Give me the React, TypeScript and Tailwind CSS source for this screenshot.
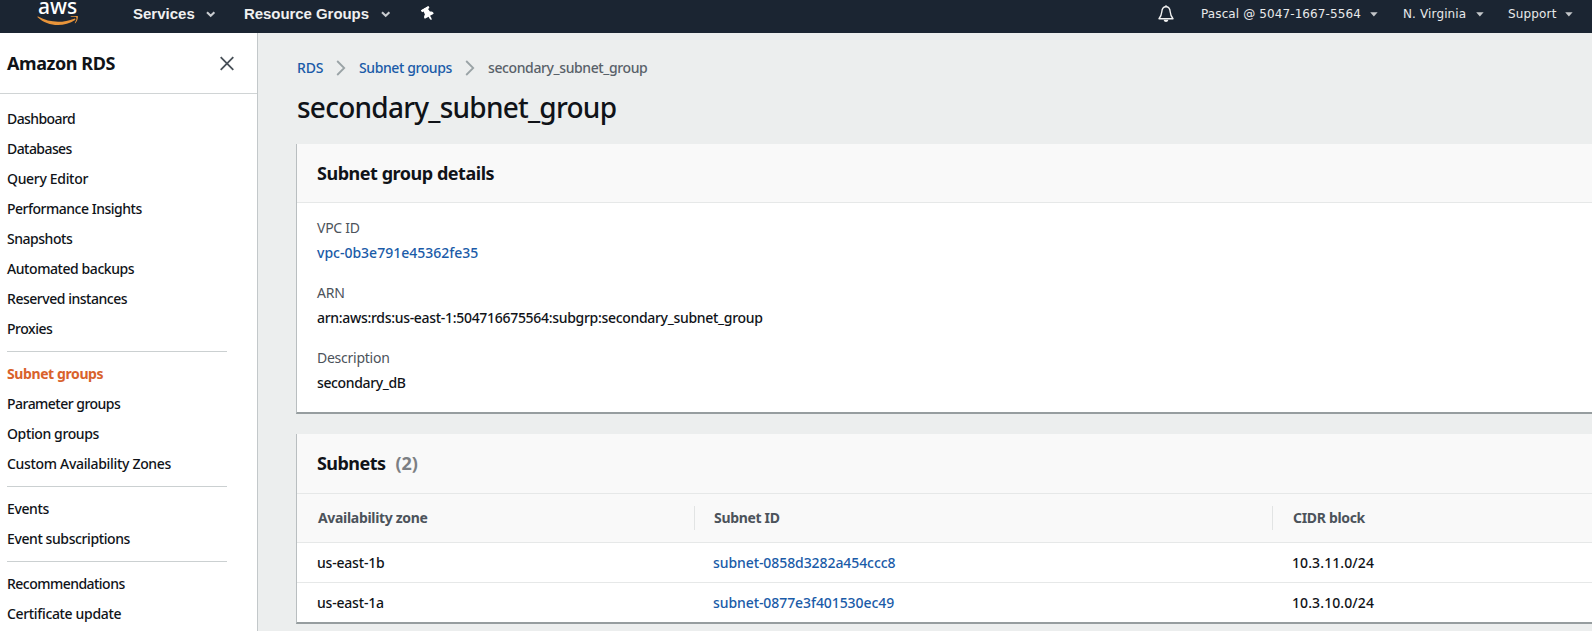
import React from "react";
import { FaThumbtack } from "react-icons/fa";

type Entry = { label: string; tracking: string; active?: boolean };

const sections: Entry[][] = [
  [
    { label: "Dashboard", tracking: "tracking-[-0.58px]" },
    { label: "Databases", tracking: "tracking-[-0.57px]" },
    { label: "Query Editor", tracking: "tracking-[-0.32px]" },
    { label: "Performance Insights", tracking: "tracking-[-0.49px]" },
    { label: "Snapshots", tracking: "tracking-[-0.47px]" },
    { label: "Automated backups", tracking: "tracking-[-0.43px]" },
    { label: "Reserved instances", tracking: "tracking-[-0.47px]" },
    { label: "Proxies", tracking: "tracking-[-0.48px]" },
  ],
  [
    { label: "Subnet groups", tracking: "tracking-[-0.4px]", active: true },
    { label: "Parameter groups", tracking: "tracking-[-0.52px]" },
    { label: "Option groups", tracking: "tracking-[-0.38px]" },
    { label: "Custom Availability Zones", tracking: "tracking-[-0.32px]" },
  ],
  [
    { label: "Events", tracking: "tracking-[-0.38px]" },
    { label: "Event subscriptions", tracking: "tracking-[-0.4px]" },
  ],
  [
    { label: "Recommendations", tracking: "tracking-[-0.53px]" },
    { label: "Certificate update", tracking: "tracking-[-0.34px]" },
  ],
];

const subnets = [
  { zone: "us-east-1b", id: "subnet-0858d3282a454ccc8", cidr: "10.3.11.0/24" },
  { zone: "us-east-1a", id: "subnet-0877e3f401530ec49", cidr: "10.3.10.0/24" },
];

function Chevron() {
  return (
    <svg width="10" height="7" viewBox="0 0 10 7" fill="none" stroke="#c9ccd0" strokeWidth="2.1">
      <path d="M1 1.200 4.700 4.700l3.700-3.500" />
    </svg>
  );
}

function Caret() {
  return (
    <svg width="8" height="5" viewBox="0 0 8 5" fill="#c4c7ca">
      <path d="M0.200 0.200h7.400L3.900 4.400z" />
    </svg>
  );
}

function Separator() {
  return (
    <svg width="10" height="16" viewBox="0 0 10 16" fill="none" stroke="#9aa3a6" strokeWidth="1.800">
      <path d="M1.200 1 8.200 8l-7 7" />
    </svg>
  );
}

function TopBar() {
  return (
    <header className="flex h-[33px] shrink-0 bg-[#1b2532] text-[#f0f0f0]">
      <div className="flex w-[133px] shrink-0 flex-col pl-[37px]">
        <span className="block h-[16px] pl-[1px] font-['Noto_Sans',sans-serif] text-[21px] leading-[12px] font-medium text-white">
          aws
        </span>
        <svg width="42" height="11" viewBox="0 0 42 11" fill="#e8943a">
          <path d="M0.600 1.200C0.200 0.900 0.600 0.300 1.100 0.600 12.500 7 25.500 7.200 37.300 2.700c0.900-0.400 1.600 0.600 0.800 1.200C26.800 11.400 10.600 10.700 0.600 1.200z" />
          <path d="M39.300 1.500c-0.900-1-4-0.600-5.400-0.400-0.500 0-0.500-0.400-0.100-0.600 2.200-1.300 6.400-1 6.900-0.400 0.600 0.700-0.200 5.300-2.400 7.100-0.300 0.300-0.700 0.100-0.500-0.300 0.600-1.200 2.300-4.500 1.500-5.400z" />
        </svg>
      </div>
      <nav className="flex h-[28px] items-center font-['Liberation_Sans',sans-serif] text-[15px] font-bold">
        <span className="w-[73px]">Services</span>
        <span className="w-[38px]"><Chevron /></span>
        <span className="w-[137px] tracking-[-0.06px]">Resource Groups</span>
        <span className="w-[41px]"><Chevron /></span>
        <FaThumbtack className="h-[14px] w-[12px] -rotate-[30deg] text-white" />
      </nav>
      <div className="flex-1" />
      <div className="flex h-[28px] w-[434px] shrink-0 items-center font-['DejaVu_Sans',sans-serif] text-[12px] text-[#e8e9ea]">
        <svg className="mr-[27px]" width="16" height="18" viewBox="0 0 16 18" fill="none" stroke="#f2f2f2" strokeWidth="1.400">
          <path d="M8 1.800C5 1.800 4 4 3.800 6.800 3.600 9.800 3 11.200 1 13.800h14c-2-2.600-2.600-4-2.800-7C12 4 11 1.800 8 1.800z" strokeLinejoin="round" />
          <path d="M8 0.300v1.500" />
          <path d="M5.700 14.800h4.600c-0.200 1.500-1.100 2.200-2.300 2.200s-2.100-0.700-2.300-2.200z" fill="#f2f2f2" stroke="none" />
        </svg>
        <span className="w-[169px] tracking-[0.11px]">Pascal @ 5047-1667-5564</span>
        <span className="w-[33px]"><Caret /></span>
        <span className="w-[73px] tracking-[0.13px]">N. Virginia</span>
        <span className="w-[32px]"><Caret /></span>
        <span className="w-[57px] tracking-[0.15px]">Support</span>
        <Caret />
      </div>
    </header>
  );
}

function Sidebar() {
  return (
    <aside className="w-[258px] shrink-0 border-r border-[#c3c8ca] bg-white">
      <div className="flex h-[61px] items-center justify-between border-b border-[#d0d4d5] pr-[22px] pl-[7px]">
        <h2 className="text-[18px] font-bold tracking-[-0.43px]">Amazon RDS</h2>
        <svg width="15" height="15" viewBox="0 0 15 15" fill="none" stroke="#485058" strokeWidth="1.800">
          <path d="M0.700 1.200l12.600 12.600M13.300 1.200 0.700 13.800" />
        </svg>
      </div>
      <div className="flex flex-col pt-[10px] pr-[30px] pl-[7px] text-sm font-medium">
        {sections.map((entries, index) => (
          <ul key={index} className={index > 0 ? "mt-[7px] border-t border-[#cbd0d1] pt-[7px]" : ""}>
            {entries.map((entry) => (
              <li
                key={entry.label}
                className={`h-[30px] leading-[30px] whitespace-nowrap ${entry.tracking} ${entry.active ? "font-bold text-[#d9622b]" : ""}`}
              >
                {entry.label}
              </li>
            ))}
          </ul>
        ))}
      </div>
    </aside>
  );
}

function Field({ label, children }: { label: string; children: React.ReactNode }) {
  return (
    <div className="h-[65px] text-sm leading-[25px]">
      <dt className="tracking-[-0.25px] text-[#4c535b]">{label}</dt>
      <dd className="font-medium">{children}</dd>
    </div>
  );
}

export default function App() {
  return (
    <div className="flex h-[631px] w-full flex-col overflow-hidden bg-[#eceeee] font-['Noto_Sans',sans-serif] text-[#101318]">
      <TopBar />
      <div className="flex min-h-0 flex-1">
        <Sidebar />
        <main className="min-w-0 flex-1 pt-[24px] pl-[38px]">
          <div className="flex h-[22px] items-center pl-px text-sm font-medium text-[#1a5ba8]">
            <span className="w-[39px] tracking-[-0.2px]">RDS</span>
            <span className="w-[23px]"><Separator /></span>
            <span className="w-[106px] tracking-[-0.4px]">Subnet groups</span>
            <span className="w-[23px]"><Separator /></span>
            <span className="tracking-[-0.39px] text-[#596169]">secondary_subnet_group</span>
          </div>
          <h1 className="h-[65px] pt-[8px] pl-px text-[28px] leading-[40px] font-medium tracking-[-0.76px]">secondary_subnet_group</h1>

          <section className="h-[270px] border-b-2 border-l border-b-[#969d9f] border-l-[#b9bec0] bg-white">
            <h2 className="h-[59px] border-b border-[#e6e8e8] bg-[#f9f9f9] pl-[20px] text-[18px] leading-[59px] font-bold tracking-[-0.47px]">
              Subnet group details
            </h2>
            <dl className="pt-[12px] pl-[20px]">
              <Field label="VPC ID"><a className="text-[#1a5ba8]">vpc-0b3e791e45362fe35</a></Field>
              <Field label="ARN">
                <span className="tracking-[-0.305px]">arn:aws:rds:us-east-1:504716675564:subgrp:secondary_subnet_group</span>
              </Field>
              <Field label="Description"><span className="tracking-[-0.37px]">secondary_dB</span></Field>
            </dl>
          </section>

          <section className="mt-[20px] h-[190px] border-b-2 border-l border-b-[#969d9f] border-l-[#b9bec0] bg-white">
            <h2 className="flex h-[60px] items-center gap-[10px] border-b border-[#e6e8e8] bg-[#f9f9f9] pl-[20px] text-[18px] font-bold">
              <span className="tracking-[-0.55px]">Subnets</span>
              <span className="text-[#7c7f83]">(2)</span>
            </h2>
            <div className="flex h-[49px] items-center border-b border-[#e6e8e8] bg-[#f9f9f9] text-sm font-bold tracking-[-0.32px] text-[#4c535b]">
              <span className="w-[397px] pl-[21px]">Availability zone</span>
              <span className="h-[24px] w-[578px] border-l border-[#e2e4e4] pl-[19px] leading-[24px]">Subnet ID</span>
              <span className="h-[24px] border-l border-[#e2e4e4] pl-[20px] leading-[24px]">CIDR block</span>
            </div>
            {subnets.map((row) => (
              <div key={row.id} className="flex h-10 items-center border-b border-[#e6e8e8] text-sm font-medium last:h-[39px] last:border-b-0">
                <span className="w-[416px] pl-[20px] tracking-[-0.2px]">{row.zone}</span>
                <a className="w-[579px] tracking-[-0.08px] text-[#1a5ba8]">{row.id}</a>
                <span className="tracking-[0.1px]">{row.cidr}</span>
              </div>
            ))}
          </section>
        </main>
      </div>
    </div>
  );
}
